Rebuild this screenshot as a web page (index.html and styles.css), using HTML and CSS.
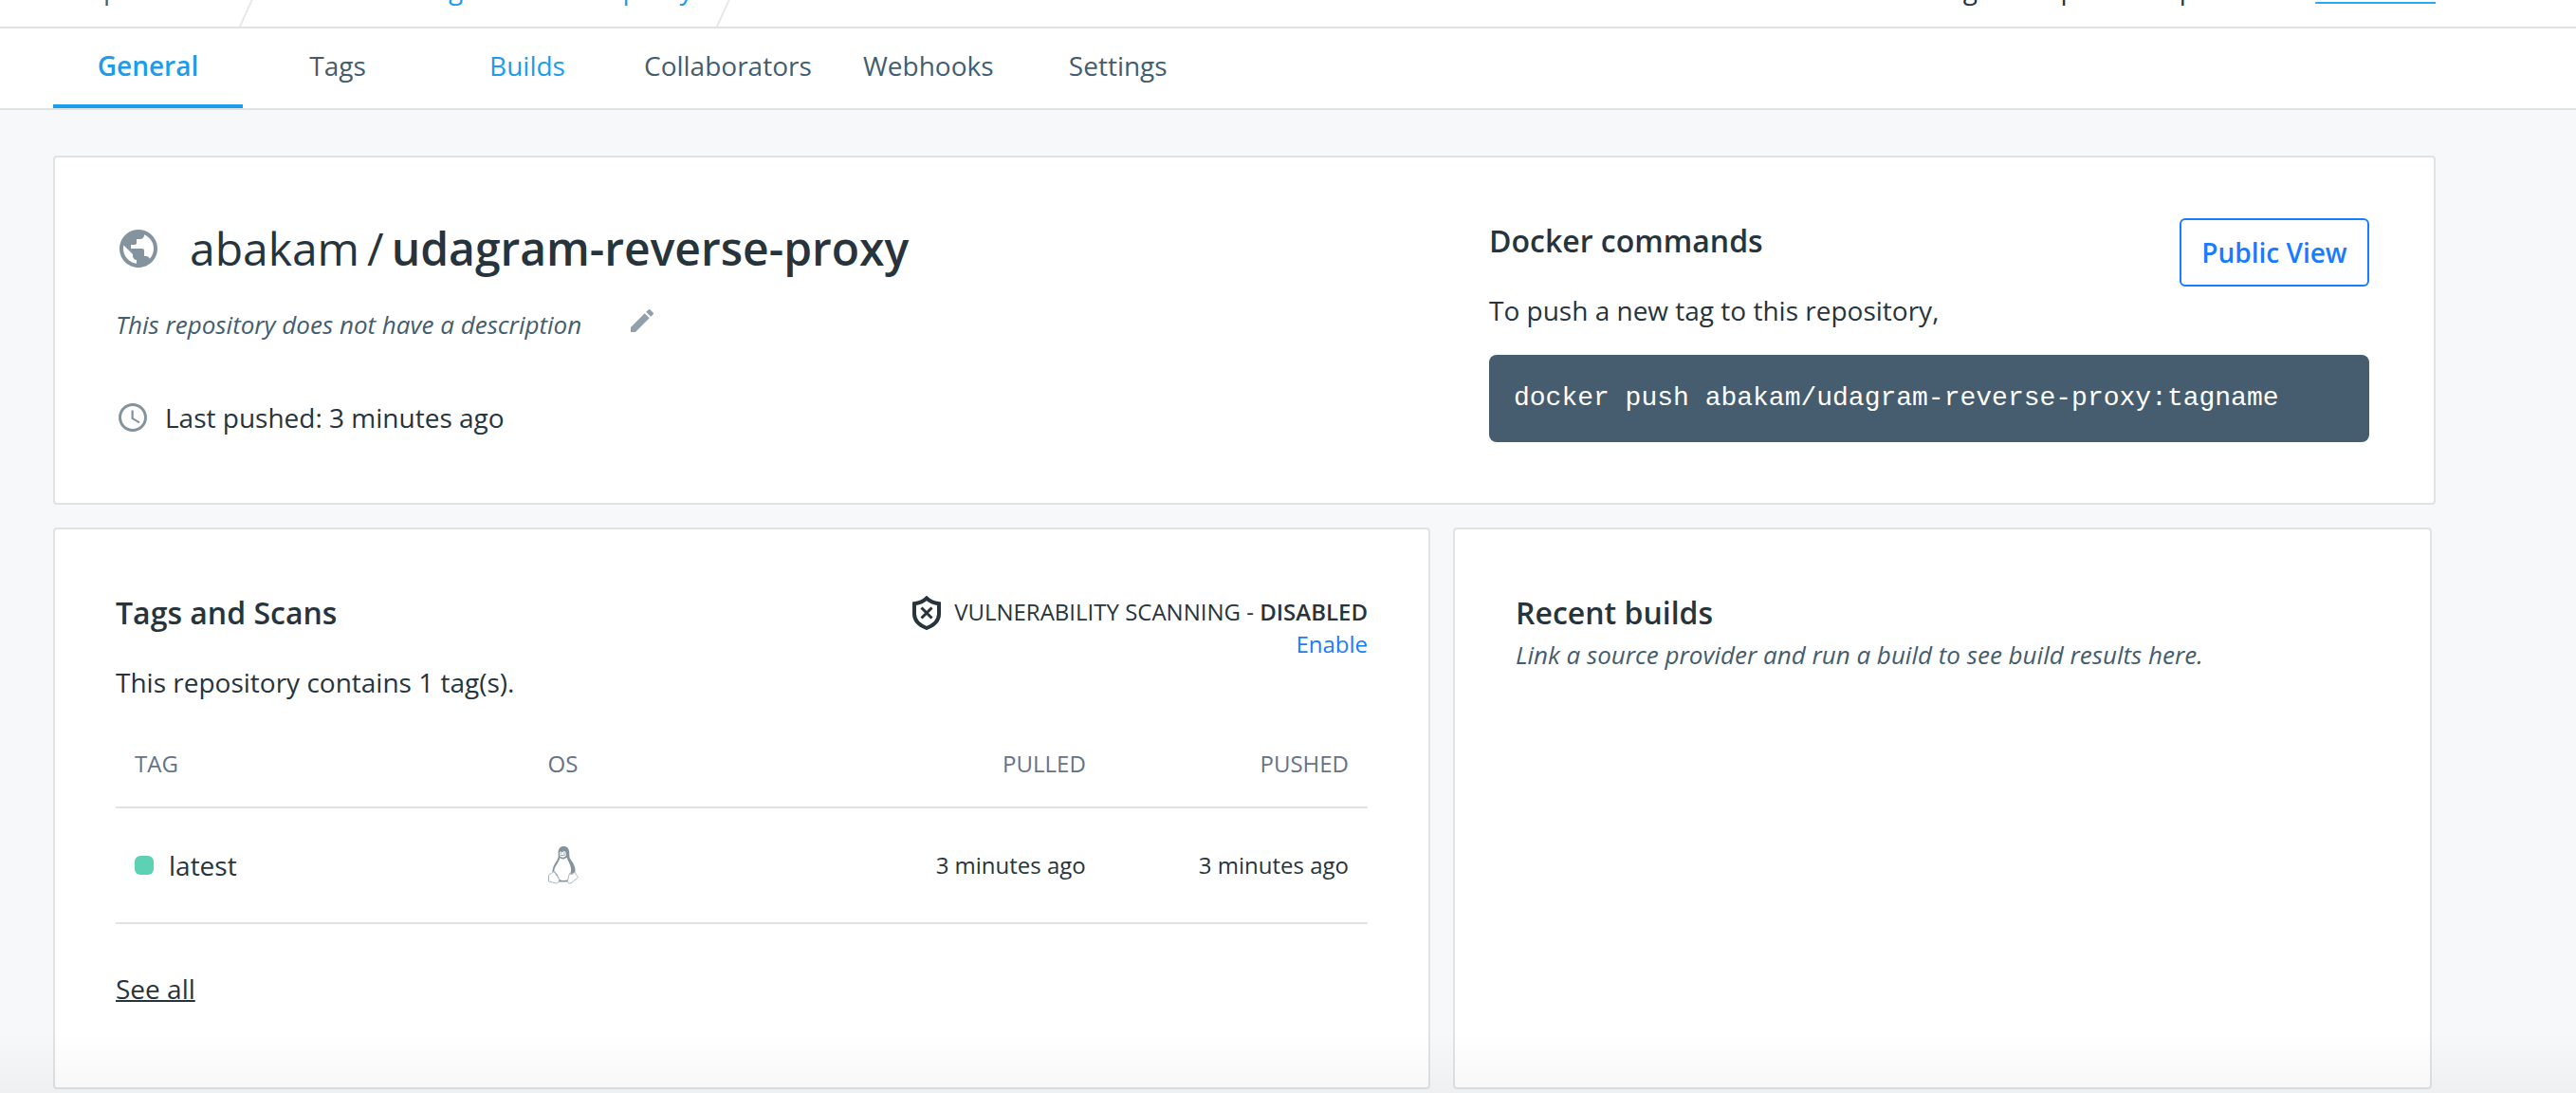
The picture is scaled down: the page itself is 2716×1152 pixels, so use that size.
FILE: index.html
```
<!DOCTYPE html>
<html lang="en">
<head>
<meta charset="utf-8">
<meta name="viewport" content="width=device-width, initial-scale=1">
<title>abakam/udagram-reverse-proxy</title>
<link rel="stylesheet" href="styles.css">
</head>
<body>
<header class="topbar">
  <nav class="crumbs" aria-label="Breadcrumb">
    <a class="crumb" href="#">Repositories</a>
    <svg class="crumb-sep" viewBox="0 0 38 80" aria-hidden="true"><path d="M37 0L1 80"/></svg>
    <a class="crumb crumb-current" href="#">abakam / udagram-reverse-proxy</a>
    <svg class="crumb-sep" viewBox="0 0 38 80" aria-hidden="true"><path d="M37 0L1 80"/></svg>
  </nav>
  <p class="quota">Using 0 of 1 private repositories. <a class="quota-link" href="#">Get more</a></p>
</header>

<nav class="tabs" aria-label="Repository">
  <a class="tab tab-active" href="#" aria-current="page">General</a>
  <a class="tab" href="#">Tags</a>
  <a class="tab tab-link" href="#">Builds</a>
  <a class="tab" href="#">Collaborators</a>
  <a class="tab" href="#">Webhooks</a>
  <a class="tab" href="#">Settings</a>
</nav>

<main class="content">
  <section class="card overview">
    <div class="about">
      <h1 class="title">
        <svg class="globe" viewBox="0 0 24 24" aria-hidden="true"><path d="M12 2C6.48 2 2 6.48 2 12s4.48 10 10 10 10-4.480 10-10S17.520 2 12 2zm-1 17.930c-3.950-.49-7-3.850-7-7.930 0-.62.08-1.210.21-1.790L9 15v1c0 1.100.9 2 2 2v1.930zm6.900-2.540c-.26-.81-1-1.390-1.900-1.390h-1v-3c0-.55-.45-1-1-1H8v-2h2c.55 0 1-.45 1-1V7h2c1.100 0 2-.9 2-2v-.41c2.930 1.190 5 4.060 5 7.410 0 2.080-.8 3.970-2.100 5.390z"/></svg>
        <span class="title-text"><span>abakam</span><span class="slash">/</span><strong class="repo">udagram-reverse-proxy</strong></span>
      </h1>
      <div class="description">
        <p class="muted">This repository does not have a description</p>
        <button class="edit" type="button" aria-label="Edit description">
          <svg viewBox="0 0 24 24" aria-hidden="true"><path d="M3 17.250V21h3.750L17.810 9.940l-3.750-3.750L3 17.250zM20.710 7.040c.39-.39.39-1.020 0-1.410l-2.340-2.340c-.39-.39-1.020-.39-1.410 0l-1.830 1.830 3.750 3.750 1.830-1.830z"/></svg>
        </button>
      </div>
      <p class="pushed">
        <svg viewBox="0 0 24 24" aria-hidden="true"><path d="M11.990 2C6.470 2 2 6.480 2 12s4.470 10 9.990 10C17.520 22 22 17.520 22 12S17.520 2 11.990 2zM12 20c-4.420 0-8-3.580-8-8s3.580-8 8-8 8 3.580 8 8-3.580 8-8 8zm.5-13H11v6l5.250 3.150.75-1.230-4.500-2.670z"/></svg>
        Last pushed: 3 minutes ago
      </p>
    </div>
    <div class="commands">
      <div class="commands-head">
        <div>
          <h2 class="heading">Docker commands</h2>
          <p class="lead">To push a new tag to this repository,</p>
        </div>
        <button class="outline-button" type="button">Public View</button>
      </div>
      <pre class="code"><code>docker push abakam/udagram-reverse-proxy:tagname</code></pre>
    </div>
  </section>

  <div class="columns">
    <section class="card">
      <div class="scans-head">
        <div>
          <h2 class="heading">Tags and Scans</h2>
          <p class="lead">This repository contains 1 tag(s).</p>
        </div>
        <div class="scanning">
          <p class="scanning-state">
            <svg class="shield" viewBox="0 0 30 36" aria-hidden="true"><path d="M15 2.500C12 5.500 7 7.700 2 8.300V19c0 7 5.500 12 13 15 7.500-3 13-8 13-15V8.300C23 7.700 18 5.500 15 2.500z"/><path class="shield-cross" d="M9.500 12.500l11 11M20.500 12.500l-11 11"/></svg>
            <span>VULNERABILITY SCANNING - <strong class="strong">DISABLED</strong></span>
          </p>
          <a class="enable" href="#">Enable</a>
        </div>
      </div>
      <table class="tags">
        <thead>
          <tr><th class="col-tag" scope="col">TAG</th><th scope="col">OS</th><th class="col-time" scope="col">PULLED</th><th class="col-time" scope="col">PUSHED</th></tr>
        </thead>
        <tbody>
          <tr>
            <td><span class="tag-name"><span class="dot"></span>latest</span></td>
            <td>
              <svg class="tux" viewBox="0 0 32 40" role="img" aria-label="Linux">
                <path class="tux-body" d="M16.500 0C12.500 0 10.500 2.500 10.600 6.500c.1 3.500.4 5.500-1.300 8.300C6.800 18.500 4.500 22 4.300 28l3 3 3.500 6.500h11L23 30l5.500-3c.5-5-2-9.500-4.500-12.500-1.800-2.500-1.700-4.500-1.800-8C22.100 2.500 20 0 16.500 0z"/>
                <path class="tux-belly" d="M12.500 12c1.500 2 4 2 7-.3 1 3.300 4 6.800 4.600 12 .1 2-.5 4.300-1.100 6.300l-1.500 4.500c-3 2-7 2-9.500.5L9.500 29.500 6.200 26c.5-5 4.800-8.500 6.300-14z"/>
                <path class="tux-belly" d="M12 7c.2-2 2.300-2 2.700 0 .8-2.300 3.500-2.300 3.800 0l.5 2.500c-2 2.600-5 3-7 .6z"/>
                <path class="tux-line" d="M13.300 6.500v1.300M16.800 6.500v1.300M12.300 9c2 .7 4 .6 6-.3"/>
                <path class="tux-foot" d="M4.500 27.300c1-.8 2-.2 2.800 1l3.700 5.500c1.200 2.400 0 4.800-2.500 5.200-2.500-.2-5-1.600-8-2v-6.500c0-1.300 3-1.500 4-3.200z"/>
                <path class="tux-foot" d="M22.500 28.500c2 1.800 4 1 5.500-1.300 1.500 1.300.8 3 3.500 5-.2 2.300-4.500 3.300-6.500 6-2.500 1.600-5 .6-4.500-2.200z"/>
              </svg>
            </td>
            <td class="col-time">3 minutes ago</td>
            <td class="col-time">3 minutes ago</td>
          </tr>
        </tbody>
      </table>
      <a class="see-all" href="#">See all</a>
    </section>
    <section class="card">
      <h2 class="heading">Recent builds</h2>
      <p class="muted">Link a source provider and run a build to see build results here.</p>
    </section>
  </div>
</main>
<div class="bottom-shade" aria-hidden="true"></div>
</body>
</html>
```
FILE: styles.css
```
* { box-sizing: border-box; }

body {
  margin: 0;
  background: #f7f8fa;
  color: #27343c;
  font-family: "Open Sans", "Noto Sans", sans-serif;
  font-size: 28px;
  line-height: 40px;
}

h1, h2, p, pre { margin: 0; }
a { color: inherit; text-decoration: none; }
button { font: inherit; cursor: pointer; }
svg { display: block; flex: none; }

.topbar {
  display: flex;
  justify-content: space-between;
  align-items: center;
  height: 82px;
  margin-top: -52px;
  padding: 0 148px 0 76px;
  background: #fff;
  border-bottom: 2px solid #dfe3e6;
}
.crumbs { display: flex; align-items: center; }
.crumb { color: #445d6e; }
.crumb-current { color: #1d9ceb; }
.crumb-sep {
  width: 38px;
  height: 80px;
  margin: 0 4px 0 14px;
  fill: none;
  stroke: #e8e8e8;
  stroke-width: 2;
}
.crumb-current + .crumb-sep { margin-left: 24px; }
.quota-link {
  color: #28a9f7;
  font-weight: 600;
  text-decoration: underline;
  text-decoration-thickness: 2px;
  text-underline-offset: 3px;
}

.tabs {
  display: flex;
  padding-left: 56px;
  background: #fff;
  border-bottom: 2px solid #dfe3e6;
}
.tab {
  min-width: 200px;
  padding: 19px 23px 21px;
  border-bottom: 4px solid transparent;
  color: #445d6e;
  text-align: center;
}
.tab-link { color: #1d9ceb; }
.tab-active { color: #1d9ceb; border-color: #1d9ceb; font-weight: 600; }

.content { padding: 48px 148px 4px 56px; }
.card {
  padding: 64px;
  background: #fff;
  border: 2px solid #dfe3e6;
  border-radius: 4px;
}
.overview {
  display: grid;
  grid-template-columns: 1448fr 928fr;
  padding-right: 68px;
}
.columns {
  display: grid;
  grid-template-columns: 1452fr 1032fr;
  gap: 24px;
  margin: 24px 4px 0 0;
}

.heading { font-size: 32px; font-weight: 600; line-height: 48px; }
.lead { margin-top: 29px; }
.muted { color: #445d6e; font-size: 26px; font-style: italic; }

.title {
  display: flex;
  align-items: center;
  gap: 30px;
  font-size: 48px;
  font-weight: 400;
  line-height: 64px;
}
.globe { width: 48px; height: 48px; fill: #83949f; }
.title-text { display: flex; gap: 8px; }
.repo { font-weight: 600; }
.description { display: flex; align-items: flex-start; gap: 48px; margin-top: 28px; }
.edit { padding: 0; border: 0; background: none; }
.edit svg { width: 32px; height: 32px; fill: #91a0aa; }
.pushed { display: flex; align-items: center; gap: 16px; margin-top: 58px; }
.pushed svg { width: 36px; height: 36px; fill: #83949f; }

.commands-head { display: flex; justify-content: space-between; align-items: flex-start; }
.outline-button {
  width: 200px;
  height: 72px;
  padding: 0;
  background: #fff;
  border: 2px solid #177cff;
  border-radius: 6px;
  color: #177cff;
  font-weight: 600;
}
.code {
  margin-top: 27px;
  padding: 26px;
  background: #455d6e;
  border-radius: 8px;
  color: #fff;
  font-family: "Liberation Mono", monospace;
  font-size: 28px;
  overflow: auto;
}
.code code { font: inherit; }

.scans-head { display: flex; justify-content: space-between; align-items: flex-start; }
.scanning { padding-top: 6px; font-size: 24px; line-height: 34px; text-align: right; }
.scanning-state { display: flex; gap: 14px; height: 34px; }
.shield { width: 30px; height: 36px; fill: none; stroke: #27343c; stroke-width: 4; }
.shield-cross { stroke-width: 3; }
.strong { font-weight: 600; }
.enable { color: #177cff; }

.tags {
  width: 100%;
  margin-top: 21px;
  border-spacing: 0;
  table-layout: fixed;
}
.tags th {
  height: 92px;
  color: #677285;
  font-size: 24px;
  font-weight: 400;
}
.tags td { height: 122px; }
.tags th, .tags td {
  padding: 0 20px;
  border-bottom: 2px solid #dfe3e6;
  text-align: left;
}
.tags .col-tag { width: 33%; }
.tags .col-time { width: 21%; font-size: 24px; text-align: right; }
.tag-name { display: flex; align-items: center; gap: 16px; }
.dot { width: 20px; height: 20px; border-radius: 6px; background: #5cd1b3; }
.tux { width: 32px; height: 40px; }
.tux-body { fill: #83949f; }
.tux-belly { fill: #fff; }
.tux-line { fill: none; stroke: #83949f; stroke-width: 1; }
.tux-foot { fill: #fff; stroke: #aab5bd; stroke-width: 1; }
.see-all {
  display: inline-block;
  margin: 48px 0 20px;
  text-decoration: underline;
  text-decoration-thickness: 2px;
}

.bottom-shade {
  position: fixed;
  right: 0;
  bottom: 0;
  left: 0;
  height: 64px;
  background: linear-gradient(transparent, rgba(0, 0, 0, 0.03));
  pointer-events: none;
}
```
